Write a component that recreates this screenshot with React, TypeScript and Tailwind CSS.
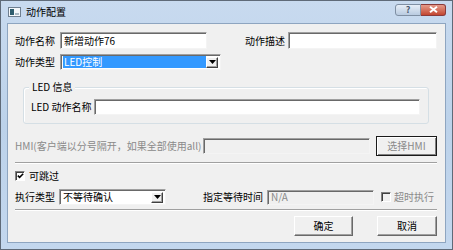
import React from "react";

const font = { fontFamily: "'Noto Sans CJK SC', 'Noto Sans', sans-serif" };

const sunken =
  "border border-t-[#a0a0a0] border-l-[#a0a0a0] border-b-[#f4f4f4] border-r-[#f4f4f4] shadow-[inset_1px_1px_0_#696969]";

function TextBox({ className, value, disabled }: { className: string; value?: string; disabled?: boolean }) {
  return (
    <div
      className={`${sunken} ${className} ${disabled ? "bg-[#f0f0f0] text-[#8a8a8a]" : "bg-white text-black"} flex items-center pl-[3px] text-[10px] leading-none`}
    >
      {value}
    </div>
  );
}

function Arrow() {
  return (
    <div className="flex h-[11px] w-[12px] items-center justify-center border border-t-white border-l-white border-b-[#404040] border-r-[#404040] bg-[#f0f0f0] shadow-[inset_-1px_-1px_0_#a0a0a0]">
      <svg width="7" height="4" viewBox="0 0 7 4">
        <path d="M0 0h7L3.5 4z" fill="#000" />
      </svg>
    </div>
  );
}

function Select({ className, value, selected }: { className: string; value: string; selected?: boolean }) {
  return (
    <div className={`${sunken} ${className} flex items-center bg-white pl-[2px] pr-[2px]`}>
      <div
        className={`flex h-[12px] flex-1 items-center pl-[1px] text-[10px] leading-none ${selected ? "bg-[#3399ff] text-white" : "text-black"}`}
      >
        {value}
      </div>
      <Arrow />
    </div>
  );
}

function Button({ label, className, def, disabled }: { label: string; className: string; def?: boolean; disabled?: boolean }) {
  return (
    <div
      className={`${className} flex items-center justify-center ${
        def
          ? "border border-[#1a1a1a] shadow-[inset_1px_1px_0_#ffffff,inset_-1px_-1px_0_#808080]"
          : "border border-t-white border-l-white border-b-[#696969] border-r-[#696969] shadow-[inset_-1px_-1px_0_#a0a0a0]"
      } bg-[#f0f0f0] text-[10px] leading-none ${disabled ? "text-[#8a8a8a]" : "text-black"}`}
    >
      {label}
    </div>
  );
}

function Check({ checked }: { checked?: boolean }) {
  return (
    <div className="flex h-[10px] w-[10px] items-center justify-center border border-t-[#808080] border-l-[#808080] border-b-white border-r-white bg-white shadow-[inset_1px_1px_0_#404040]">
      {checked && (
        <svg width="7" height="6" viewBox="0 0 7 6">
          <path d="M0.8 2.6L2.6 4.4L6.2 0.8" stroke="#000" strokeWidth="1.5" fill="none" />
        </svg>
      )}
    </div>
  );
}

function Separator() {
  return (
    <div className="flex flex-col">
      <div className="h-px bg-[#a0a0a0]" />
      <div className="h-px bg-white" />
    </div>
  );
}

export default function App() {
  return (
    <div
      className="flex h-[250px] w-[453px] flex-col border border-[#5f6a78] bg-gradient-to-b from-[#c8daef] via-[#bcd2ea] to-[#c3d7ee]"
      style={font}
    >
      <div className="flex h-[22px] items-center">
        <svg className="ml-[7px]" width="13" height="10" viewBox="0 0 13 10">
          <rect x="0.5" y="0.5" width="12" height="9" fill="#f4f7fa" stroke="#6f7f90" />
          <rect x="2" y="2" width="4" height="6" fill="#2f5d6e" />
          <rect x="7" y="6" width="4" height="2" fill="#a8b8c4" />
        </svg>
        <span className="ml-[5px] text-[10px] leading-none text-black">动作配置</span>
        <div className="ml-auto mr-[6px] mt-[-5px] flex">
          <div className="flex h-[12px] w-[26px] items-center justify-center rounded-l-[3px] border border-[#7f8fa3] bg-gradient-to-b from-[#e6eef8] to-[#b9cbe0] text-[9px] font-bold leading-none text-[#4a5a6e]">
            ?
          </div>
          <div className="flex h-[12px] w-[25px] items-center justify-center rounded-r-[3px] border border-l-0 border-[#8a3a3a] bg-gradient-to-b from-[#e59a8a] to-[#c2452f]">
            <svg width="9" height="7" viewBox="0 0 9 7">
              <path d="M1 0.8L8 6.2M8 0.8L1 6.2" stroke="#ffffff" strokeWidth="2" />
            </svg>
          </div>
        </div>
      </div>

      <div className="ml-[6px] mr-[6px] flex h-[220px] flex-col border border-[#8ea5c0] bg-[#f0f0f0] pl-[7px] pr-[8px] text-black">
        <div className="mt-[8px] flex h-[17px] items-center">
          <span className="w-[45px] text-[10px] leading-none">动作名称</span>
          <TextBox className="h-[17px] w-[147px]" value="新增动作76" />
          <span className="ml-[38px] w-[43px] text-[10px] leading-none">动作描述</span>
          <TextBox className="h-[17px] flex-1" />
        </div>

        <div className="mt-[5px] flex h-[16px] items-center">
          <span className="w-[45px] text-[10px] leading-none">动作类型</span>
          <Select className="h-[16px] w-[161px]" value="LED控制" selected />
        </div>

        <div className="relative ml-[8px] mt-[17px] h-[37px] w-[406px] rounded-[3px] border border-[#d5dfe5] shadow-[inset_1px_1px_0_#ffffff]">
          <span className="absolute left-[5px] top-[-6px] bg-[#f0f0f0] px-[3px] text-[10px] leading-none">LED 信息</span>
          <div className="ml-[7px] mr-[8px] mt-[11px] flex h-[16px] items-center">
            <span className="w-[63px] text-[10px] leading-none">LED 动作名称</span>
            <TextBox className="h-[16px] flex-1" />
          </div>
        </div>

        <div className="mt-[12px] flex h-[20px] items-center">
          <span className="w-[188px] whitespace-nowrap text-[10px] leading-none text-[#8a8a8a]">
            HMI(客户端以分号隔开，如果全部使用all)
          </span>
          <TextBox className="h-[16px] w-[167px]" disabled />
          <Button label="选择HMI" className="ml-[6px] h-[20px] flex-1" def disabled />
        </div>

        <div className="mt-[6px]">
          <Separator />
        </div>

        <div className="mt-[7px] flex h-[10px] items-center">
          <Check checked />
          <span className="ml-[4px] text-[10px] leading-none">可跳过</span>
        </div>

        <div className="mt-[8px] flex h-[16px] items-center">
          <span className="w-[44px] text-[10px] leading-none">执行类型</span>
          <Select className="h-[16px] w-[107px]" value="不等待确认" />
          <span className="ml-[37px] w-[64px] text-[10px] leading-none">指定等待时间</span>
          <TextBox className="h-[15px] w-[107px]" value="N/A" disabled />
          <div className="ml-[7px] flex items-center">
            <div className="flex h-[10px] w-[10px] border border-t-[#808080] border-l-[#808080] border-b-white border-r-white bg-[#f0f0f0] shadow-[inset_1px_1px_0_#404040]" />
            <span className="ml-[3px] text-[10px] leading-none text-[#8a8a8a]">超时执行</span>
          </div>
        </div>

        <div className="mt-[4px]">
          <Separator />
        </div>

        <div className="mt-[5px] flex h-[20px] justify-end">
          <Button label="确定" className="h-[20px] w-[59px]" />
          <Button label="取消" className="ml-[24px] h-[20px] w-[60px]" />
        </div>
      </div>
    </div>
  );
}
